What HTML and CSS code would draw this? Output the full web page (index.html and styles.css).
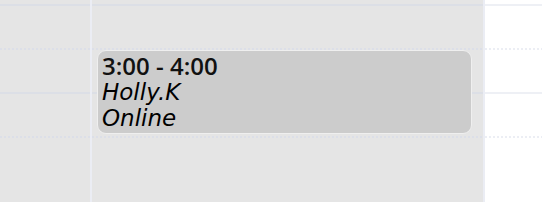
FILE: index.html
```
<!DOCTYPE html>
<html lang="en">
<head>
    <meta charset="UTF-8">
    <meta name="viewport" content="width=device-width, initial-scale=1.0">
    <title>Week view</title>
    <link rel="stylesheet" href="styles.css">
</head>
<body>
    <div class="calendar">
        <div class="col col-gutter">
            <div class="slot slot-first"></div>
            <div class="slot hour"></div>
            <div class="slot half"></div>
            <div class="slot hour"></div>
            <div class="slot half"></div>
        </div>
        <div class="vline"></div>
        <div class="col col-day">
            <div class="slot slot-first"></div>
            <div class="slot hour"></div>
            <div class="slot half"></div>
            <div class="slot hour"></div>
            <div class="slot half"></div>
            <div class="event">
                <div class="event-time">3:00 - 4:00</div>
                <div class="event-info">Holly.K</div>
                <div class="event-info">Online</div>
            </div>
        </div>
        <div class="vline"></div>
        <div class="col col-next">
            <div class="slot slot-first"></div>
            <div class="slot hour"></div>
            <div class="slot half"></div>
            <div class="slot hour"></div>
            <div class="slot half"></div>
        </div>
    </div>
</body>
</html>
```

FILE: styles.css
```
body, html {
    margin: 0;
    height: 100%;
    overflow: hidden;
    background: #fff;
    font-family: "DejaVu Sans", sans-serif;
}
.calendar {
    display: flex;
    height: 202px;
}
.col {
    position: relative;
    display: flex;
    flex-direction: column;
}
.col-gutter {
    width: 90px;
    background: #e5e5e5;
}
.col-day {
    width: 391px;
    background: #e5e5e5;
}
.col-next {
    flex: 1;
    background: #fff;
}
.vline {
    width: 2px;
    background: #ebedf4;
}
.slot {
    height: 42px;
    flex: none;
    border-top: 2px solid transparent;
}
.slot-first {
    height: 4px;
    border-top: none;
}
.slot.hour {
    border-top-color: #dcdfe6;
}
.slot.half {
    border-top: none;
    padding-top: 2px;
    background: repeating-linear-gradient(90deg, #dcdfe8 0 2px, transparent 2px 4px) 0 0 / 100% 2px no-repeat;
}
.col-next .slot.hour {
    border-top-color: #eef0f5;
}
.col-next .slot.half {
    background: repeating-linear-gradient(90deg, #eceef4 0 2px, transparent 2px 4px) 0 0 / 100% 2px no-repeat;
}
.event {
    position: absolute;
    top: 50px;
    left: 5px;
    width: 365px;
    height: 77px;
    padding: 2px 4px 3px;
    background: #cccccc;
    border: 1px solid #efefef;
    border-radius: 9px;
    color: #000;
    font-size: 21px;
    line-height: 26px;
}
.event-time {
    font-family: "Open Sans", sans-serif;
    font-size: 24px;
    font-weight: 600;
    color: #111;
}
.event-info {
    font-size: 23px;
    font-style: italic;
}
```
